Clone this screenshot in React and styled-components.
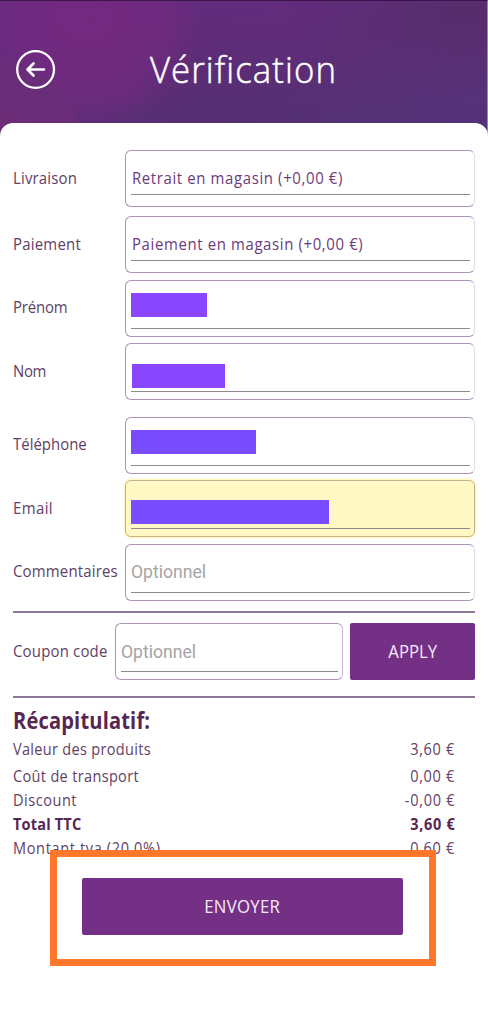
import React from 'react';
import styled, { createGlobalStyle, ThemeProvider } from 'styled-components';

const theme = {
  color: {
    purple: '#743085',
    label: '#5f4166',
    value: '#6d3a7c',
    strong: '#552752',
    border: '#ad94bb',
    rule: '#8f7799',
    underline: '#8c8a8e',
    placeholder: '#a5a5a5',
    orange: '#ff772b',
    autofill: '#fff8c4'
  }
};

const GlobalStyle = createGlobalStyle`
  * {
    box-sizing: border-box;
  }

  body {
    margin: 0;
    background: #fff;
    font-family: 'Open Sans', sans-serif;
  }
`;

const Screen = styled.div`
  width: 488px;
  height: 1024px;
  overflow: hidden;
  background: #fff;
`;

const Header = styled.header`
  display: grid;
  grid-template-columns: 56px 1fr 56px;
  align-items: center;
  height: 136px;
  padding: 3px 15px 0;
  border-top: 1px solid #3a154d;
  border-right: 1px solid #9c87ab;
  background:
    radial-gradient(circle at 0 140px, #6d2e77 0, #692d79 78px, transparent 80px),
    radial-gradient(circle at 90px 20px, rgba(120, 40, 128, .8) 0, rgba(118, 41, 128, .6) 75px, transparent 110px),
    radial-gradient(ellipse at 225px 130px, rgba(79, 45, 106, .7) 0, rgba(79, 45, 106, 0) 100%),
    radial-gradient(ellipse 190px 90px at 470px 10px, rgba(82, 45, 102, .8) 0, rgba(82, 45, 102, 0) 100%),
    linear-gradient(168deg, #682a83 0, #672d81 50%, #5d337f 72%, #51347d 100%);
`;

const BackButton = styled.button`
  display: flex;
  width: 41px;
  height: 41px;
  margin-bottom: 2px;
  padding: 0;
  border: 0;
  background: none;
`;

const Title = styled.h1`
  margin: 0 0 2px;
  color: #fff;
  font-size: 37px;
  font-weight: 300;
  line-height: 50px;
  letter-spacing: 1.15px;
  text-align: center;
  transform: scaleX(.94);
  -webkit-text-stroke: .5px #fff;
`;

const Panel = styled.main`
  display: flex;
  flex-direction: column;
  height: 902px;
  margin-top: -13px;
  padding: 27px 13px 0;
  border-radius: 13px 13px 0 0;
  background: #fff;
`;

const Row = styled.div`
  display: flex;
  align-items: center;
  height: 57px;
  margin-bottom: ${props => props.$gap}px;
`;

const Text = styled.span`
  display: inline-block;
  letter-spacing: ${props => props.$spacing || 0}px;
  white-space: nowrap;
  transform: scaleX(.88);
  transform-origin: ${props => props.$origin || 'left'} center;
`;

const Label = styled.label`
  flex: none;
  width: ${props => props.$width || 112}px;
  padding-bottom: 2px;
  color: ${props => props.theme.color.label};
  font-size: 17px;
  line-height: 24px;
`;

const Field = styled.div`
  flex: 1;
  height: 57px;
  padding: 0 4px 0 5px;
  border: 1px solid ${props => props.theme.color.border};
  border-right-color: ${props => props.$coupon ? '#cbb6d6' : '#e3dbe8'};
  border-radius: 6px;
  background: ${props => props.$filled ? props.theme.color.autofill : '#fff'};
  ${props => props.$filled && `
    border-color: #c2b390;
    box-shadow: 0 0 0 1.5px #fff8c4;
  `}
`;

const Underline = styled.div`
  display: flex;
  height: ${props => props.$select ? 44 : 48}px;
  padding-top: ${props => props.$top || 0}px;
  padding-left: ${props => props.$left || 0}px;
  border-bottom: 1px solid ${props => props.theme.color.underline};
`;

const Value = styled(Text)`
  color: ${props => props.theme.color.value};
  font-size: 17px;
  line-height: 24px;
`;

const Placeholder = styled.span`
  color: ${props => props.theme.color.placeholder};
  font-family: Roboto, sans-serif;
  font-size: 17.6px;
  line-height: 24px;
`;

const Mask = styled.div`
  width: ${props => props.$width}px;
  height: 24px;
  background: ${props => props.$tone};
`;

const Rule = styled.div`
  flex: none;
  height: 2px;
  background: ${props => props.theme.color.rule};
`;

const CouponRow = styled.div`
  display: flex;
  align-items: center;
  margin: 10px 0 16px;
`;

const Button = styled.button`
  flex: none;
  width: ${props => props.$width}px;
  height: 57px;
  padding: 0 0 1px;
  border: 0;
  border-radius: 2px;
  background: ${props => props.theme.color.purple};
  color: #f7e9fa;
  font-family: inherit;
  font-size: 19px;
`;

const CouponButton = styled(Button)`
  margin: -1px 0 0 7px;
`;

const SummaryTitle = styled.h2`
  margin: 6.5px 0 1px;
  color: ${props => props.theme.color.strong};
  font-size: 22.8px;
  line-height: 31px;
`;

const SummaryRow = styled.div`
  display: flex;
  flex: none;
  justify-content: space-between;
  height: ${props => props.$tall ? 27 : 24.3}px;
  padding-right: 19.5px;
  color: ${props => props.$bold ? props.theme.color.strong : props.theme.color.label};
  font-size: 16.5px;
  font-weight: ${props => props.$bold ? 700 : 400};
  line-height: 24px;
`;

// sits over the last summary row
const SubmitFrame = styled.div`
  position: relative;
  z-index: 1;
  flex: none;
  display: flex;
  align-items: center;
  justify-content: center;
  width: 386px;
  height: 116.5px;
  margin: -11px 0 0 37px;
  padding: 0 1px 3px 0;
  border: 7.5px solid ${props => props.theme.color.orange};
  background: #fff;
`;

const fields = [
  { label: 'Livraison', spacing: .18, gap: 9, value: 'Retrait en magasin (+0,00 €)' },
  { label: 'Paiement', spacing: .25, gap: 6.5, value: 'Paiement en magasin (+0,00 €)' },
  { label: 'Prénom', spacing: -.2, gap: 6.5, mask: { width: 76, tone: '#8847ff', top: 12 } },
  { label: 'Nom', spacing: -.4, gap: 16.5, mask: { width: 93, tone: '#8847ff', top: 19.5, left: 1 } },
  { label: 'Téléphone', spacing: 0, gap: 6.5, mask: { width: 125, tone: '#794cff', top: 12.5 } },
  { label: 'Email', spacing: .45, gap: 6.5, filled: true, mask: { width: 198, tone: '#794cff', top: 19 } },
  { label: 'Commentaires', spacing: .2, gap: 10.5 }
];

const summary = [
  { label: 'Valeur des produits', spacing: .36, amount: '3,60 €', tall: true },
  { label: 'Coût de transport', spacing: .38, amount: '0,00 €' },
  { label: 'Discount', spacing: .6, amount: '-0,00 €' },
  { label: 'Total TTC', spacing: .2, amount: '3,60 €', bold: true },
  { label: 'Montant tva (20.0%)', spacing: .73, amount: '0,60 €' }
];

const BackIcon = () => (
  <svg width="41" height="41" viewBox="0 0 41 41" fill="none" stroke="#fff" strokeLinecap="round" strokeLinejoin="round">
    <circle cx="20.6" cy="20.5" r="18.4" strokeWidth="2.3" />
    <path d="M29 20.5H12.5M18.5 14.5l-6 6 6 6" strokeWidth="2.6" />
  </svg>
);

const renderContent = ({ value, mask }) => {
  if (value) {
    return <Underline $select $top={14.5} $left={1}><Value $spacing={.7}>{value}</Value></Underline>;
  }
  if (mask) {
    return <Underline $top={mask.top} $left={mask.left}><Mask $width={mask.width} $tone={mask.tone} /></Underline>;
  }
  return <Underline $top={15.5}><Placeholder>Optionnel</Placeholder></Underline>;
};

export default function App() {
  return (
    <ThemeProvider theme={theme}>
      <GlobalStyle />
      <Screen>
        <Header>
          <BackButton aria-label="Retour"><BackIcon /></BackButton>
          <Title>Vérification</Title>
        </Header>
        <Panel>
          {fields.map(field => (
            <Row key={field.label} $gap={field.gap}>
              <Label><Text $spacing={field.spacing}>{field.label}</Text></Label>
              <Field $filled={field.filled}>{renderContent(field)}</Field>
            </Row>
          ))}
          <Rule />
          <CouponRow>
            <Label $width={102}><Text $spacing={.2}>Coupon code</Text></Label>
            <Field $coupon>{renderContent({})}</Field>
            <CouponButton $width={125}><Text $origin="center">APPLY</Text></CouponButton>
          </CouponRow>
          <Rule />
          <SummaryTitle><Text $spacing={.2}>Récapitulatif:</Text></SummaryTitle>
          {summary.map(row => (
            <SummaryRow key={row.label} $tall={row.tall} $bold={row.bold}>
              <Text $spacing={row.spacing}>{row.label}</Text>
              <Text $spacing={.8} $origin="right">{row.amount}</Text>
            </SummaryRow>
          ))}
          <SubmitFrame>
            <Button $width={321}><Text $spacing={.35} $origin="center">ENVOYER</Text></Button>
          </SubmitFrame>
        </Panel>
      </Screen>
    </ThemeProvider>
  );
}
